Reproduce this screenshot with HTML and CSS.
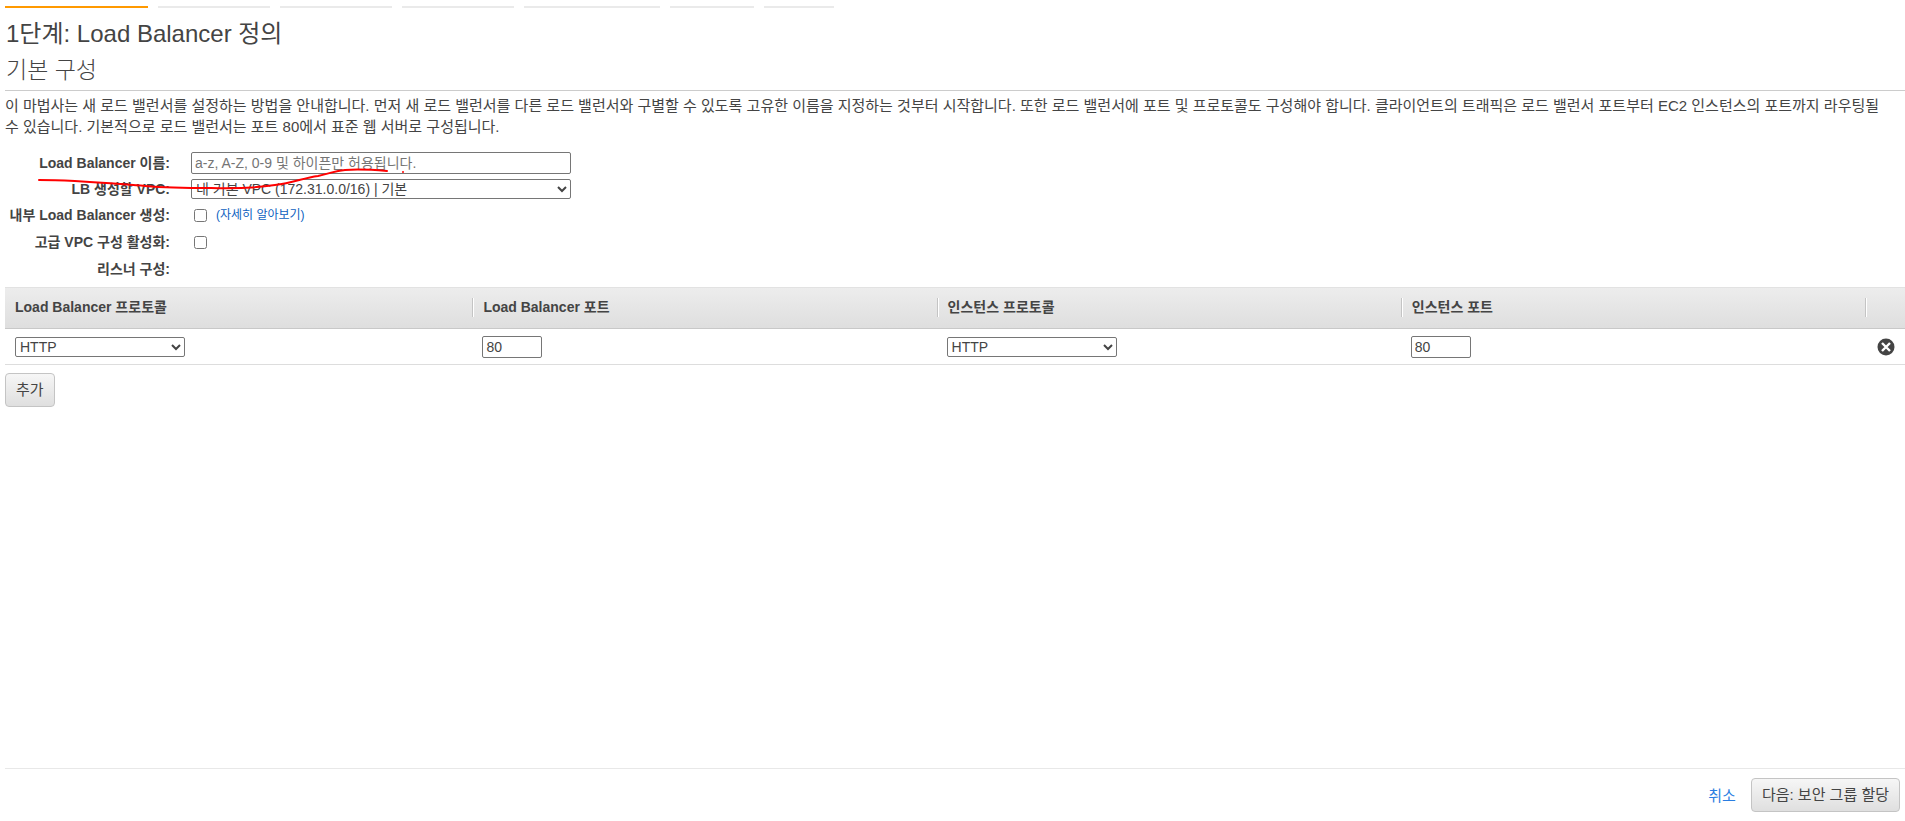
FILE: index.html
```html
<!DOCTYPE html>
<html lang="ko">
<head>
  <meta charset="UTF-8">
  <meta name="viewport" content="width=device-width, initial-scale=1.0">
  <title>Load Balancer 정의</title>
  <link rel="stylesheet" href="styles.css">
</head>
<body>
  <div class="wizard">
    <ul class="steps">
      <li class="step active"></li>
      <li class="step"></li>
      <li class="step"></li>
      <li class="step"></li>
      <li class="step wide"></li>
      <li class="step short"></li>
      <li class="step shorter"></li>
    </ul>
    <main class="content">
      <h1>1단계: Load Balancer 정의</h1>
      <h2>기본 구성</h2>
      <p class="intro">이 마법사는 새 로드 밸런서를 설정하는 방법을 안내합니다. 먼저 새 로드 밸런서를 다른 로드 밸런서와 구별할 수 있도록 고유한 이름을 지정하는 것부터 시작합니다. 또한 로드 밸런서에 포트 및 프로토콜도 구성해야 합니다. 클라이언트의 트래픽은 로드 밸런서 포트부터 EC2 인스턴스의 포트까지 라우팅될 수 있습니다. 기본적으로 로드 밸런서는 포트 80에서 표준 웹 서버로 구성됩니다.</p>
      <form class="form">
        <div class="row">
          <label for="lb-name">Load Balancer 이름:</label>
          <input class="field" type="text" id="lb-name" placeholder="a-z, A-Z, 0-9 및 하이픈만 허용됩니다.">
        </div>
        <div class="row">
          <label for="lb-vpc">LB 생성할 VPC:</label>
          <select class="field" id="lb-vpc">
            <option>내 기본 VPC (172.31.0.0/16) | 기본</option>
          </select>
        </div>
        <div class="row check">
          <label for="lb-internal">내부 Load Balancer 생성:</label>
          <input type="checkbox" id="lb-internal">
          <a class="more" href="#">(자세히 알아보기)</a>
        </div>
        <div class="row check">
          <label for="lb-advanced">고급 VPC 구성 활성화:</label>
          <input type="checkbox" id="lb-advanced">
        </div>
        <div class="row check">
          <span class="label">리스너 구성:</span>
        </div>
        <svg class="mark" viewBox="0 0 400 40" width="400" height="40">
          <path d="M34 13C70 13 100 16 140 19C164 21 186 21 206 21C236 22 250 21 270 18C288 16 298 11 313 9C328 6 328 4 340 3C354 2 370 3 382 4"/>
          <circle cx="398" cy="5" r="1"/>
        </svg>
      </form>
      <table class="listeners">
        <colgroup>
          <col class="col-first">
          <col>
          <col>
          <col>
          <col class="col-remove">
        </colgroup>
        <thead>
          <tr>
            <th><span>Load Balancer 프로토콜</span></th>
            <th><span>Load Balancer 포트</span></th>
            <th><span>인스턴스 프로토콜</span></th>
            <th><span>인스턴스 포트</span></th>
            <th><span></span></th>
          </tr>
        </thead>
        <tbody>
          <tr>
            <td>
              <select class="protocol" aria-label="Load Balancer 프로토콜">
                <option>HTTP</option>
                <option>HTTPS</option>
                <option>TCP</option>
              </select>
            </td>
            <td><input class="port" type="text" value="80" aria-label="Load Balancer 포트"></td>
            <td>
              <select class="protocol" aria-label="인스턴스 프로토콜">
                <option>HTTP</option>
                <option>HTTPS</option>
                <option>TCP</option>
              </select>
            </td>
            <td><input class="port" type="text" value="80" aria-label="인스턴스 포트"></td>
            <td>
              <button class="remove" type="button" aria-label="삭제">
                <svg viewBox="0 0 18 18" width="18" height="18">
                  <circle cx="9" cy="9" r="8.5" fill="#444"/>
                  <path d="M5 5L13 13M13 5L5 13" stroke="#fff" stroke-width="2.4"/>
                </svg>
              </button>
            </td>
          </tr>
        </tbody>
      </table>
      <button class="btn" type="button">추가</button>
    </main>
    <footer class="footer">
      <a href="#">취소</a>
      <button class="btn" type="button">다음: 보안 그룹 할당</button>
    </footer>
  </div>
</body>
</html>
```

FILE: styles.css
```css
*{
  box-sizing: border-box;
}
body,h1,h2,p,ul{
  margin: 0;
  padding: 0;
}
body{
  color: #444;
  background: #fff;
  font-family: "Liberation Sans", "Noto Sans CJK KR", sans-serif;
  font-size: 14px;
  line-height: 21px;
}
input,select,button{
  margin: 0;
  color: #444;
  font-family: inherit;
  font-size: 14px;
}
a{
  color: #2a7de1;
  text-decoration: none;
}
.wizard{
  display: flex;
  flex-direction: column;
  min-height: 100vh;
  padding-left: 5px;
}
.steps{
  display: flex;
  gap: 10px;
  padding-top: 6px;
  list-style: none;
}
.step{
  width: 112px;
  height: 2px;
  background: #eaeaea;
}
.step.active{
  width: 143px;
  background: #ff9900;
}
.step.wide{
  width: 136px;
}
.step.short{
  width: 84px;
}
.step.shorter{
  width: 70px;
}
.content{
  flex: 1;
}
h1,h2{
  padding-left: 1px;
  font-weight: normal;
}
h1{
  padding-top: 8px;
  font-size: 24px;
  line-height: 36px;
}
h2{
  padding-bottom: 2px;
  font-size: 23px;
  line-height: 36px;
  font-weight: 300;
  border-bottom: 1px solid #ccc;
}
.intro{
  padding: 4px 18px 0 0;
  font-size: 15px;
}
.form{
  position: relative;
  padding: 13px 0 4px;
}
.row{
  display: flex;
  align-items: center;
  height: 26px;
}
.row.check{
  height: 27px;
}
.row label,
.label{
  width: 165px;
  margin-right: 21px;
  font-weight: bold;
  text-align: right;
  white-space: nowrap;
}
.field{
  width: 380px;
}
input[type="text"]{
  height: 22px;
  padding: 1px 3px;
  border: 1px solid #767676;
  border-radius: 2px;
}
input::placeholder{
  color: #757575;
}
select{
  height: 20px;
  background: #fff;
  border: 1px solid #767676;
  border-radius: 2px;
}
.row input[type="checkbox"]{
  width: 13px;
  height: 13px;
  margin: 0 9px 0 3px;
}
.more{
  color: #0d5fc0;
  font-size: 12px;
}
/* 빨간색 표시선 */
.mark{
  position: absolute;
  top: 30px;
  left: 0;
  pointer-events: none;
}
.mark path{
  fill: none;
  stroke: #f00;
  stroke-width: 2;
  stroke-linecap: round;
}
.mark circle{
  fill: #f00;
}
.listeners{
  width: 100%;
  table-layout: fixed;
  border-collapse: separate;
  border-spacing: 0;
}
.col-first{
  width: 24.6%;
}
.col-remove{
  width: 40px;
}
.listeners thead{
  background: linear-gradient(#ededed, #dedede);
}
.listeners th{
  height: 42px;
  padding: 0 0 2px;
  text-align: left;
  border-top: 1px solid #e2e2e2;
  border-bottom: 1px solid #c8c8c8;
}
.listeners th span{
  display: block;
  height: 19px;
  padding-left: 10px;
  line-height: 19px;
  border-left: 1px solid #c4c4c4;
  box-shadow: inset 1px 0 #fff;
}
.listeners th:first-child span{
  border-left: 0;
  box-shadow: none;
}
.listeners td{
  height: 36px;
  padding: 0 10px;
  border-bottom: 1px solid #ddd;
}
.listeners td > *{
  display: block;
}
.protocol{
  width: 170px;
}
.port{
  width: 60px;
}
.listeners .remove{
  height: 18px;
  margin-left: auto;
  padding: 0;
  background: none;
  border: 0;
}
.remove svg{
  display: block;
}
.btn{
  height: 34px;
  padding: 0 10px 4px;
  font-size: 15px;
  background: linear-gradient(#f6f6f6, #dfdfdf);
  border: 1px solid #c4c4c4;
  border-radius: 4px;
}
.content > .btn{
  margin-top: 8px;
}
.footer{
  display: flex;
  align-items: center;
  justify-content: flex-end;
  gap: 15px;
  height: 53px;
  padding-right: 5px;
  font-size: 15px;
  border-top: 1px solid #e8e8e8;
}
```
